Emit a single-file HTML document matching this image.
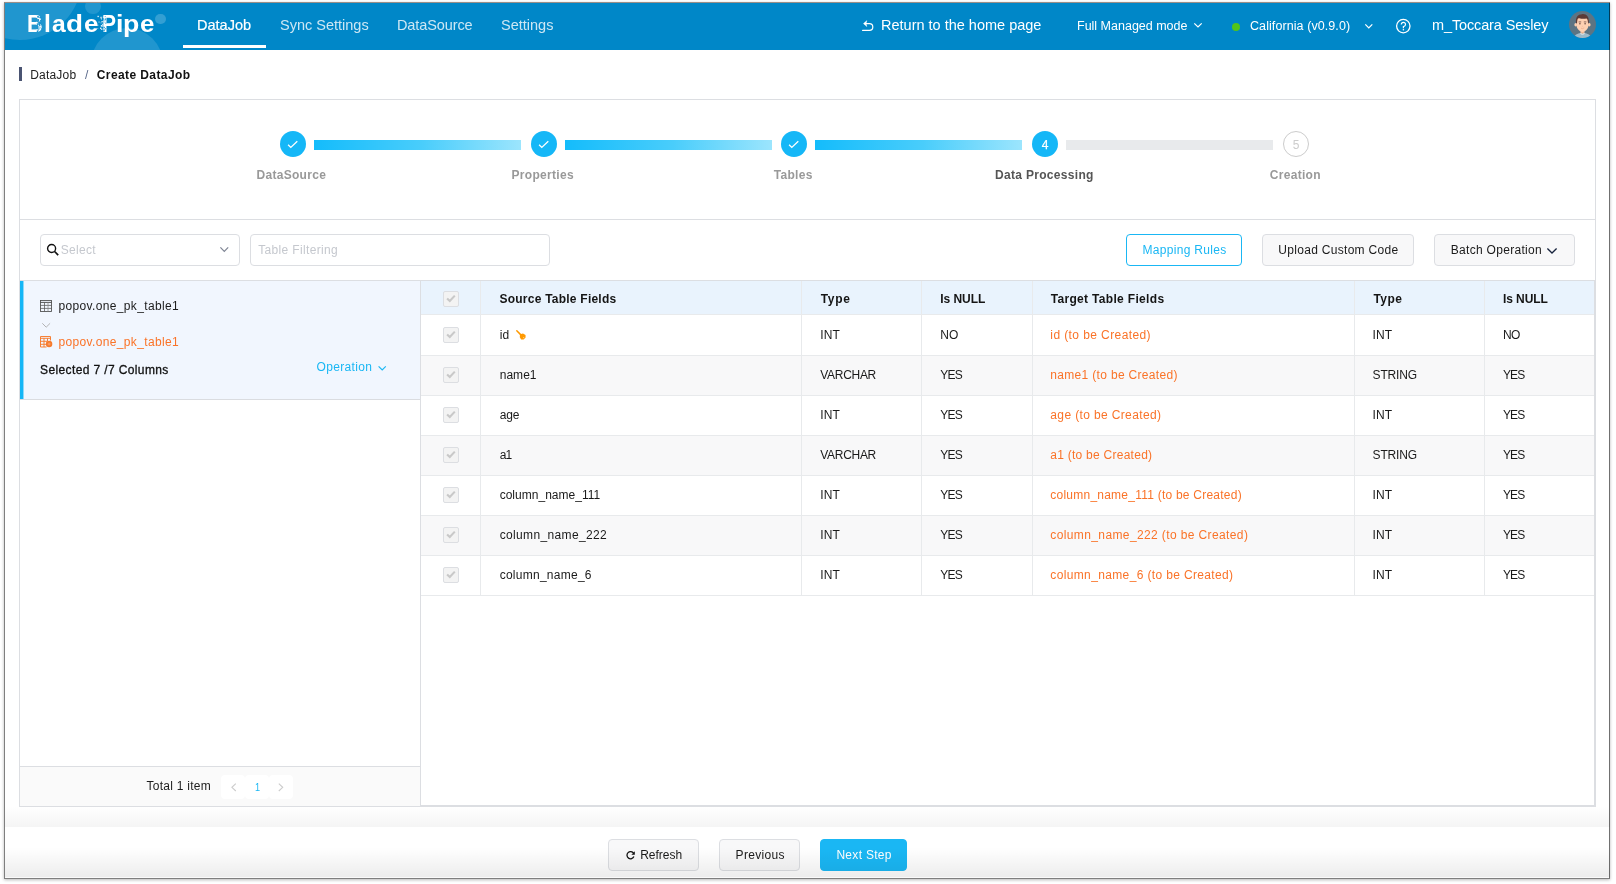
<!DOCTYPE html>
<html>
<head>
<meta charset="utf-8">
<title>BladePipe - Create DataJob</title>
<style>
*{box-sizing:border-box;margin:0;padding:0}
html,body{width:1616px;height:884px;overflow:hidden;background:#fff}
body{font-family:"Liberation Sans",sans-serif;font-size:12px;color:#17233d;position:relative}
.abs{position:absolute}
svg{position:absolute;overflow:visible}
#frame{position:absolute;left:5px;top:3px;width:1605px;height:875px;background:#fff;overflow:hidden;will-change:transform}
#frameborder{position:absolute;left:4px;top:2px;width:1606px;height:877px;border:1px solid rgba(0,0,0,.5);border-right-color:rgba(0,0,0,.56);border-top-color:rgba(70,50,40,.55);box-shadow:0 1px 3px rgba(0,0,0,.28);pointer-events:none}
/* header */
#hdr{position:absolute;left:0;top:0;width:1605px;height:47px;background:#0087c8;overflow:hidden}
#hdr .bub{position:absolute;border-radius:50%;background:rgba(255,255,255,.125)}
.nav{position:absolute;top:0;height:47px;line-height:45px;color:rgba(255,255,255,.8);font-size:14.5px;white-space:nowrap}
.nav.on{color:#fff;-webkit-text-stroke:.2px #fff}
.hr{position:absolute;top:1px;height:47px;line-height:45px;color:#fff;white-space:nowrap}
/* breadcrumb */
.bc{position:absolute;top:64px;height:16px;line-height:16px;font-size:12px;white-space:nowrap;color:#222}
/* card */
#card{position:absolute;left:14px;top:96px;width:1577px;height:708px;border:1px solid #dcdee2;background:#fff}
.stepc{position:absolute;top:128px;width:26px;height:26px;border-radius:50%;background:#15b7f7;color:#fff;text-align:center;line-height:28px;font-size:12px;-webkit-text-stroke:.25px #fff}
.stepl{position:absolute;top:137px;height:10px;background:linear-gradient(90deg,#14bcfb 0%,#49cdfb 52%,#9ce5fd 100%)}
.stept{position:absolute;top:164px;width:200px;text-align:center;font-weight:bold;font-size:12px;color:#999;line-height:16px;letter-spacing:.3px;white-space:nowrap}
.btn{position:absolute;height:32px;line-height:30px;border:1px solid #dcdee2;border-radius:4px;background:#f8f8f9;font-size:12px;color:#1a1a1a;white-space:nowrap}
.btn span{position:absolute;top:0;white-space:nowrap}
.inp{position:absolute;height:32px;border:1px solid #dcdee2;border-radius:4px;background:#fff;font-size:12px;color:#c5c8ce;line-height:30px;white-space:nowrap}
/* table */
.th{position:absolute;top:279.3px;height:34px;line-height:34px;font-weight:bold;font-size:12px;color:#151515;white-space:nowrap;letter-spacing:.18px}
.td{position:absolute;height:40px;line-height:40px;font-size:12px;color:#1a1a1a;white-space:nowrap;letter-spacing:.25px}
.or{color:#fa7328}
.vline{position:absolute;top:278px;width:1px;height:315px;background:#e8eaec}
.hline{position:absolute;left:416px;width:1174px;height:1px;background:#e8eaec}
.cb{position:absolute;left:438px;width:16px;height:16px;border:1px solid #dcdee2;border-radius:2px;background:#f3f3f3}
.cb svg{left:-1px;top:-1px}
.t12{position:absolute;line-height:16px;font-size:12px;white-space:nowrap;letter-spacing:.25px}
</style>
</head>
<body>
<div id="frame">
  <!-- HEADER -->
  <div id="hdr">
    <div class="bub" style="left:-47px;top:-87px;width:124px;height:124px"></div>
    <div class="bub" style="left:80.3px;top:-4.3px;width:15.5px;height:15.5px"></div>
    <div class="bub" style="left:85.5px;top:25.4px;width:72px;height:72px"></div>
    <div class="bub" style="left:150.3px;top:10.6px;width:10.5px;height:10.5px;background:rgba(255,255,255,.2)"></div>
    <div class="abs" id="logo" style="left:0;top:5px;width:170px;height:32px;font-size:24.7px;font-weight:bold;color:#fff;line-height:32px;white-space:nowrap"><span class="abs" style="left:21.7px;top:0;transform-origin:0 0;transform:scaleX(0.88)">B</span><span class="abs" style="left:39.0px;top:0;transform-origin:0 0;transform:scaleX(1)">l</span><span class="abs" style="left:47.1px;top:0;transform-origin:0 0;transform:scaleX(1.0)">a</span><span class="abs" style="left:61.4px;top:0;transform-origin:0 0;transform:scaleX(1.13)">d</span><span class="abs" style="left:79.1px;top:0;transform-origin:0 0;transform:scaleX(1.05)">e</span><span class="abs" style="left:96.8px;top:0;transform-origin:0 0;transform:scaleX(0.85)">P</span><span class="abs" style="left:111.0px;top:0;transform-origin:0 0;transform:scaleX(1.08)">i</span><span class="abs" style="left:118.1px;top:0;transform-origin:0 0;transform:scaleX(1.08)">p</span><span class="abs" style="left:134.8px;top:0;transform-origin:0 0;transform:scaleX(1.05)">e</span></div>
    <svg style="left:0;top:0" width="170" height="47" viewBox="0 0 170 47"><rect x="33.7" y="20.9" width="1.4" height="1.4" fill="#1a93cf"/><rect x="33.7" y="20.1" width="1.2" height="1.2" fill="#1a93cf"/><rect x="32.4" y="20.2" width="1.2" height="1.2" fill="#1a93cf"/><rect x="35.2" y="13.7" width="1.0" height="1.0" fill="#1a93cf"/><rect x="32.0" y="24.8" width="1.3" height="1.3" fill="#1a93cf"/><rect x="31.8" y="27.5" width="1.5" height="1.5" fill="#1a93cf"/><rect x="34.6" y="21.8" width="0.9" height="0.9" fill="#1a93cf"/><rect x="31.7" y="20.4" width="0.8" height="0.8" fill="#1a93cf"/><rect x="32.5" y="16.0" width="0.8" height="0.8" fill="#1a93cf"/><rect x="33.7" y="19.1" width="1.4" height="1.4" fill="#1a93cf"/><rect x="34.0" y="22.2" width="1.1" height="1.1" fill="#1a93cf"/><rect x="34.6" y="19.3" width="1.0" height="1.0" fill="#1a93cf"/><rect x="36.2" y="27.7" width="1.4" height="1.4" fill="#1a93cf"/><rect x="34.9" y="17.1" width="1.0" height="1.0" fill="#1a93cf"/><rect x="32.9" y="13.3" width="1.3" height="1.3" fill="#1a93cf"/><rect x="33.4" y="25.4" width="1.1" height="1.1" fill="#1a93cf"/><rect x="36.0" y="25.4" width="0.8" height="0.8" fill="#1a93cf"/><rect x="32.6" y="26.4" width="1.1" height="1.1" fill="#1a93cf"/><rect x="36.1" y="18.4" width="0.9" height="0.9" fill="#1a93cf"/><rect x="34.5" y="24.3" width="1.0" height="1.0" fill="#1a93cf"/><rect x="32.0" y="17.4" width="1.5" height="1.5" fill="#1a93cf"/><rect x="35.1" y="14.0" width="1.0" height="1.0" fill="#1a93cf"/><rect x="32.1" y="13.1" width="1.4" height="1.4" fill="#1a93cf"/><rect x="32.4" y="20.9" width="1.1" height="1.1" fill="#1a93cf"/><rect x="32.5" y="23.6" width="0.9" height="0.9" fill="#1a93cf"/><rect x="34.6" y="14.0" width="1.1" height="1.1" fill="#1a93cf"/><rect x="32.6" y="16.4" width="1.5" height="1.5" fill="#1a93cf"/><rect x="35.3" y="16.9" width="1.4" height="1.4" fill="#1a93cf"/><rect x="32.6" y="18.4" width="1.4" height="1.4" fill="#1a93cf"/><rect x="34.6" y="13.8" width="1.5" height="1.5" fill="#1a93cf"/><rect x="32.6" y="16.2" width="1.3" height="1.3" fill="#1a93cf"/><rect x="33.1" y="16.8" width="0.9" height="0.9" fill="#1a93cf"/><rect x="32.0" y="21.3" width="1.0" height="1.0" fill="#1a93cf"/><rect x="34.4" y="18.0" width="1.1" height="1.1" fill="#1a93cf"/><rect x="100.3" y="19.7" width="1.0" height="1.0" fill="#1a93cf"/><rect x="100.1" y="14.9" width="0.8" height="0.8" fill="#1a93cf"/><rect x="100.2" y="25.1" width="0.8" height="0.8" fill="#1a93cf"/><rect x="98.6" y="23.8" width="1.2" height="1.2" fill="#1a93cf"/><rect x="98.6" y="27.2" width="1.1" height="1.1" fill="#1a93cf"/><rect x="99.5" y="18.7" width="0.8" height="0.8" fill="#1a93cf"/><rect x="98.3" y="27.4" width="0.8" height="0.8" fill="#1a93cf"/><rect x="99.8" y="16.1" width="1.1" height="1.1" fill="#1a93cf"/><rect x="99.5" y="16.7" width="0.8" height="0.8" fill="#1a93cf"/><rect x="99.8" y="13.1" width="0.8" height="0.8" fill="#1a93cf"/><rect x="99.4" y="25.6" width="1.0" height="1.0" fill="#1a93cf"/><rect x="98.8" y="26.7" width="0.8" height="0.8" fill="#1a93cf"/><rect x="98.2" y="16.3" width="0.9" height="0.9" fill="#1a93cf"/><rect x="98.3" y="14.8" width="0.9" height="0.9" fill="#1a93cf"/><rect x="95.4" y="14.4" width="1.0" height="1.0" fill="#fff" opacity="0.94"/><rect x="92.5" y="12.8" width="1.3" height="1.3" fill="#fff" opacity="0.94"/><rect x="92.4" y="21.7" width="1.0" height="1.0" fill="#fff" opacity="0.71"/><rect x="97.8" y="13.6" width="1.1" height="1.1" fill="#fff" opacity="0.92"/><rect x="96.4" y="22.7" width="1.3" height="1.3" fill="#fff" opacity="0.72"/><rect x="96.1" y="25.6" width="1.3" height="1.3" fill="#fff" opacity="0.88"/><rect x="97.0" y="20.8" width="1.1" height="1.1" fill="#fff" opacity="0.80"/><rect x="95.6" y="13.7" width="1.1" height="1.1" fill="#fff" opacity="0.91"/><rect x="96.3" y="18.1" width="1.2" height="1.2" fill="#fff" opacity="0.75"/><rect x="95.6" y="19.5" width="0.9" height="0.9" fill="#fff" opacity="0.77"/><rect x="97.3" y="22.1" width="1.0" height="1.0" fill="#fff" opacity="0.71"/><rect x="96.0" y="15.4" width="1.0" height="1.0" fill="#fff" opacity="0.92"/><rect x="97.1" y="18.1" width="1.1" height="1.1" fill="#fff" opacity="0.65"/><rect x="95.0" y="24.6" width="1.3" height="1.3" fill="#fff" opacity="0.93"/><rect x="93.5" y="18.5" width="1.1" height="1.1" fill="#fff" opacity="0.71"/><rect x="92.5" y="25.2" width="0.7" height="0.7" fill="#fff" opacity="0.80"/><rect x="95.8" y="22.0" width="1.3" height="1.3" fill="#fff" opacity="0.84"/></svg>
    <div class="nav on" id="n1" style="left:192px">DataJob</div>
    <div class="abs" style="left:178px;top:42px;width:83px;height:3px;background:#fff"></div>
    <div class="nav" id="n2" style="left:275px">Sync Settings</div>
    <div class="nav" id="n3" style="left:392px;letter-spacing:-.1px">DataSource</div>
    <div class="nav" id="n4" style="left:496px">Settings</div>
    <!-- return icon -->
    <svg style="left:855px;top:15px" width="16" height="16" viewBox="0 0 16 16"><path d="M4.5 5.6H9.4A3.4 3.4 0 0 1 9.4 12.4H2.6" fill="none" stroke="#fff" stroke-width="1.2" stroke-linecap="round"/><path d="M6.8 2.7L3.5 5.6L6.8 8.5L6 5.6Z" fill="#fff" stroke="#fff" stroke-width=".5" stroke-linejoin="round"/></svg>
    <div class="hr" id="h1" style="left:876px;top:0;font-size:14.5px">Return to the home page</div>
    <div class="hr" id="h2" style="left:1072px;font-size:12.5px">Full Managed mode</div>
    <svg style="left:1189px;top:20px" width="8" height="5" viewBox="0 0 8 5"><path d="M.3 .4L4 4L7.7 .4" fill="none" stroke="#fff" stroke-width="1.25"/></svg>
    <div class="abs" style="left:1227px;top:19.8px;width:8.2px;height:8.2px;border-radius:50%;background:#52c41a"></div>
    <div class="hr" id="h3" style="left:1245px;font-size:12.5px;letter-spacing:.08px">California (v0.9.0)</div>
    <svg style="left:1359.6px;top:21px" width="8" height="5" viewBox="0 0 8 5"><path d="M.3 .4L3.8 3.9L7.3 .4" fill="none" stroke="#fff" stroke-width="1.25"/></svg>
    <!-- help icon -->
    <svg style="left:1390px;top:15.2px" width="17" height="17" viewBox="0 0 17 17"><circle cx="8.3" cy="8.1" r="6.7" fill="none" stroke="#fff" stroke-width="1.3"/><path d="M6.3 6.5A2.1 2.1 0 1 1 8.4 8.5V10.2" fill="none" stroke="#fff" stroke-width="1.2"/><circle cx="8.4" cy="11.8" r=".8" fill="#fff"/></svg>
    <div class="hr" id="h4" style="left:1427px;top:0;font-size:14.5px;letter-spacing:-.13px">m_Toccara Sesley</div>
    <!-- avatar -->
    <div class="abs" style="left:1564.1px;top:8.1px;width:26.8px;height:26.8px;border-radius:50%;overflow:hidden;background:#5c7483">
    <svg style="left:-.1px;top:-.1px" width="27" height="27" viewBox="0 0 27 27">
      <g>
        <ellipse cx="13.5" cy="28" rx="9" ry="6.2" fill="#9dbaca"/>
        <rect x="11.6" y="18" width="3.8" height="4.6" fill="#f3b994"/>
        <path d="M11.4 21.6L13.5 23.4L15.6 21.6L15.4 22.9L13.5 24L11.6 22.9Z" fill="#e8eef2"/>
        <ellipse cx="6.7" cy="13.8" rx="1.3" ry="1.7" fill="#fdcfae"/>
        <ellipse cx="20.3" cy="13.8" rx="1.3" ry="1.7" fill="#fdcfae"/>
        <path d="M7.6 8.5C7.6 5 19.4 5 19.4 8.5V14.5C19.4 18 16 21 13.5 21C11 21 7.6 18 7.6 14.5Z" fill="#fed1b2"/>
        <path d="M7.1 12.4C6.2 6 9 3.4 13 3.2C17 2.6 20.6 5.5 19.9 12.4L18.9 11.6C18.8 9.5 18.6 8.2 17.6 7.4C14.5 8 10.5 7.6 9.2 7.2C8.3 8.2 8.2 9.8 8.1 11.8Z" fill="#5b3a36"/>
        <rect x="9.6" y="10.6" width="2.6" height=".7" fill="#5b3a36"/><rect x="14.8" y="10.6" width="2.6" height=".7" fill="#5b3a36"/>
        <ellipse cx="10.9" cy="12.7" rx=".8" ry=".7" fill="#6b4a40"/><ellipse cx="16.1" cy="12.7" rx=".8" ry=".7" fill="#6b4a40"/>
        <path d="M12 17.2Q13.6 18.3 15.2 16.8" fill="none" stroke="#e5a383" stroke-width=".6"/>
        <path d="M12.9 15.3H14.1" stroke="#eeb697" stroke-width=".6"/>
      </g>
    </svg>
    </div>
  </div>

  <!-- BREADCRUMB -->
  <div class="abs" style="left:14px;top:64px;width:3px;height:14px;background:#4a5472"></div>
  <div class="bc" id="b1" style="left:25.2px;letter-spacing:.2px">DataJob</div>
  <div class="bc" style="left:80px;color:#5b6b8c">/</div>
  <div class="bc" id="b2" style="left:91.8px;font-weight:bold;color:#111;letter-spacing:.4px">Create DataJob</div>

  <!-- CARD -->
  <div id="card"></div>

  <!-- STEPS -->
  <div class="stepl" style="left:309px;width:207px"></div>
  <div class="stepl" style="left:560px;width:207px"></div>
  <div class="stepl" style="left:810px;width:207px"></div>
  <div class="stepl" style="left:1061px;width:207px;background:#e8eaec"></div>
  <div class="stepc" style="left:275px"></div>
  <div class="stepc" style="left:526px"></div>
  <div class="stepc" style="left:776px"></div>
  <div class="stepc" style="left:1027px">4</div>
  <div class="stepc" style="left:1278px;background:#fff;border:1px solid #ccc;color:#ccc;line-height:26px;-webkit-text-stroke:0">5</div>
  <svg style="left:282px;top:137px" width="12" height="9" viewBox="0 0 12 9"><path d="M1.1 4.7L3.8 7.4L10.3 1.2" fill="none" stroke="#fff" stroke-width="1.3"/></svg>
  <svg style="left:533px;top:137px" width="12" height="9" viewBox="0 0 12 9"><path d="M1.1 4.7L3.8 7.4L10.3 1.2" fill="none" stroke="#fff" stroke-width="1.3"/></svg>
  <svg style="left:783px;top:137px" width="12" height="9" viewBox="0 0 12 9"><path d="M1.1 4.7L3.8 7.4L10.3 1.2" fill="none" stroke="#fff" stroke-width="1.3"/></svg>
  <div class="stept" id="s1" style="left:186.3px">DataSource</div>
  <div class="stept" id="s2" style="left:437.7px">Properties</div>
  <div class="stept" id="s3" style="left:688.2px">Tables</div>
  <div class="stept" id="s4" style="left:939.4px;color:#555">Data Processing</div>
  <div class="stept" id="s5" style="left:1190.3px">Creation</div>
  <div class="abs" style="left:15px;top:216px;width:1575px;height:1px;background:#dcdee2"></div>

  <!-- TOOLBAR -->
  <div class="inp" style="left:35px;top:231px;width:200px"><span class="abs" id="t1" style="left:19.7px;top:0;letter-spacing:.3px">Select</span></div>
  <svg style="left:41px;top:240px" width="14" height="14" viewBox="0 0 14 14"><circle cx="5.6" cy="5.5" r="4" fill="none" stroke="#111" stroke-width="1.4"/><path d="M8.6 8.5L12.2 12.1" stroke="#111" stroke-width="1.7"/></svg>
  <svg style="left:214.5px;top:244px" width="9" height="6" viewBox="0 0 9 6"><path d="M.4 .4L4.3 4.4L8.2 .4" fill="none" stroke="#808695" stroke-width="1.25"/></svg>
  <div class="inp" style="left:245px;top:231px;width:300px"><span class="abs" id="t2" style="left:7.2px;top:0;letter-spacing:.35px">Table Filtering</span></div>
  <div class="btn" style="left:1121px;top:231px;width:116px;background:#fff;border-color:#1ab7f4;color:#1ab7f4"><span id="t3" style="left:15.5px;letter-spacing:.3px">Mapping Rules</span></div>
  <div class="btn" style="left:1257px;top:231px;width:152px"><span id="t4" style="left:15.3px;letter-spacing:.3px">Upload Custom Code</span></div>
  <div class="btn" style="left:1429px;top:231px;width:141px"><span id="t5" style="left:15.8px;letter-spacing:.3px">Batch Operation</span></div>
  <svg style="left:1542.3px;top:245px" width="10" height="6" viewBox="0 0 10 6"><path d="M.4 .5L5 5L9.6 .5" fill="none" stroke="#17233d" stroke-width="1.3"/></svg>

  <div class="abs" style="left:15px;top:277px;width:1575px;height:1px;background:#dcdee2"></div>

  <!-- LEFT PANEL -->
  <div class="abs" style="left:15px;top:278px;width:400px;height:119px;background:#f1f6fe;border-bottom:1px solid #dadce0"></div>
  <div class="abs" style="left:15px;top:278px;width:3px;height:118px;background:#15b6f6"></div><div class="abs" style="left:18px;top:278px;width:1px;height:118px;background:#15b6f6;opacity:.45"></div>
  <div class="abs" style="left:415px;top:278px;width:1px;height:525px;background:#dcdee2"></div>
  <!-- table icon (dark) -->
  <svg style="left:35px;top:297px" width="12" height="12" viewBox="0 0 12 12"><rect x=".5" y=".5" width="11" height="11" fill="none" stroke="#4a4a4a" stroke-width=".85"/><path d="M.5 2.4H11.5" stroke="#444" stroke-width=".9" fill="none"/><path d="M.5 5.4H11.5M.5 8.4H11.5M4.5 2.4V11.5" stroke="#555" stroke-width=".75" fill="none"/><path d="M8 2.4V11.5" stroke="#888" stroke-width=".75" fill="none"/></svg>
  <div class="t12" id="l1" style="left:53.4px;top:295px;color:#1c1c1c;letter-spacing:.36px">popov.one_pk_table1</div>
  <svg style="left:37px;top:320px" width="9" height="5" viewBox="0 0 9 5"><path d="M.3 .3L4.2 4.2L8.1 .3" fill="none" stroke="#aaa" stroke-width=".9"/></svg>
  <!-- table icon (orange, with plus) -->
  <svg style="left:35px;top:333px" width="13" height="12" viewBox="0 0 13 12"><path d="M.5 11V.5H10.5V4.5M.5 2.3H10.5M.5 5.3H7M.5 8.3H6M.5 11H6.5M4 2.3V11M7.5 2.3V5" stroke="#f67a2c" stroke-width=".95" fill="none"/><circle cx="9.1" cy="8" r="3.2" fill="#f67a2c"/><path d="M7.6 8H10.6M9.1 6.5V9.5" stroke="#fbb28a" stroke-width=".7"/></svg>
  <div class="t12 or" id="l2" style="left:53.4px;top:331px;letter-spacing:.36px">popov.one_pk_table1</div>
  <div class="t12" id="l3" style="left:35px;top:359px;color:#111;-webkit-text-stroke:.3px #111;letter-spacing:.38px">Selected 7 /7 Columns</div>
  <div class="t12" id="l4" style="left:311.5px;top:356px;color:#1ab7f4;letter-spacing:.34px">Operation</div>
  <svg style="left:372.5px;top:362.7px" width="9" height="5" viewBox="0 0 9 5"><path d="M.6 .4L4.2 3.9L7.8 .4" fill="none" stroke="#1ab7f4" stroke-width="1.2"/></svg>
  <div class="abs" style="left:15px;top:763px;width:400px;height:40px;background:#fafafa;border-top:1px solid #dcdee2"></div>
  <div class="t12" id="l5" style="left:141.6px;top:775px;color:#1c1c1c">Total 1 item</div>
  <div class="abs" style="left:216px;top:772px;width:24px;height:24px;border-radius:4px;background:#fff"></div>
  <div class="abs" style="left:240px;top:772px;width:24px;height:24px;border-radius:4px;background:#fff"></div>
  <div class="abs" style="left:264px;top:772px;width:24px;height:24px;border-radius:4px;background:#fff"></div>
  <svg style="left:225.5px;top:780px" width="6" height="9" viewBox="0 0 6 9"><path d="M4.8 .6L.9 4.3L4.8 8" fill="none" stroke="#ccc" stroke-width="1.1"/></svg>
  <svg style="left:273.2px;top:780px" width="6" height="9" viewBox="0 0 6 9"><path d="M.8 .6L4.7 4.3L.8 8" fill="none" stroke="#ccc" stroke-width="1.1"/></svg>
  <div class="t12" style="left:249.6px;top:776.4px;color:#1ab7f4;letter-spacing:0;font-size:11.5px;transform:scaleX(.8);transform-origin:0 0">1</div>

  <!-- TABLE -->
  <div class="abs" style="left:416px;top:278px;width:1174px;height:34px;background:#e9f3fd"></div>
  <div class="abs" style="left:416px;top:353px;width:1174px;height:39px;background:#f8f8f9"></div>
  <div class="abs" style="left:416px;top:433px;width:1174px;height:39px;background:#f8f8f9"></div>
  <div class="abs" style="left:416px;top:513px;width:1174px;height:39px;background:#f8f8f9"></div>
  <div class="th" id="th0" style="left:494.50px;letter-spacing:0.233px">Source Table Fields</div>
  <div class="th" id="th1" style="left:815.64px;letter-spacing:0.713px">Type</div>
  <div class="th" id="th2" style="left:935.32px;letter-spacing:-0.052px">Is NULL</div>
  <div class="th" id="th3" style="left:1045.64px;letter-spacing:0.326px">Target Table Fields</div>
  <div class="th" id="th4" style="left:1368.38px;letter-spacing:0.448px">Type</div>
  <div class="th" id="th5" style="left:1497.90px;letter-spacing:-0.053px">Is NULL</div>
  <div class="cb" style="top:288px"><svg width="16" height="16" viewBox="0 0 16 16"><path d="M4.1 7.4L6.8 10L11.8 4.6" fill="none" stroke="#c9c9c9" stroke-width="2.1"/></svg></div>
  <div class="cb" style="top:324px"><svg width="16" height="16" viewBox="0 0 16 16"><path d="M4.1 7.4L6.8 10L11.8 4.6" fill="none" stroke="#c9c9c9" stroke-width="2.1"/></svg></div>
  <div class="td" id="r0c0" style="left:494.66px;letter-spacing:0.300px;top:312.4px">id</div>
  <div class="td" id="r0c1" style="left:815.32px;letter-spacing:0.040px;top:312.4px">INT</div>
  <div class="td" id="r0c2" style="left:935.32px;letter-spacing:-0.080px;top:312.4px">NO</div>
  <div class="td or" id="r0c3" style="left:1045.32px;letter-spacing:0.407px;top:312.4px">id (to be Created)</div>
  <div class="td" id="r0c4" style="left:1367.58px;letter-spacing:0.120px;top:312.4px">INT</div>
  <div class="td" id="r0c5" style="left:1497.90px;letter-spacing:-0.560px;top:312.4px">NO</div>
  <div class="hline" style="top:352px"></div>
  <div class="cb" style="top:364px"><svg width="16" height="16" viewBox="0 0 16 16"><path d="M4.1 7.4L6.8 10L11.8 4.6" fill="none" stroke="#c9c9c9" stroke-width="2.1"/></svg></div>
  <div class="td" id="r1c0" style="left:494.66px;letter-spacing:0.050px;top:352.4px">name1</div>
  <div class="td" id="r1c1" style="left:815.32px;letter-spacing:-0.307px;top:352.4px">VARCHAR</div>
  <div class="td" id="r1c2" style="left:935.32px;letter-spacing:-0.800px;top:352.4px">YES</div>
  <div class="td or" id="r1c3" style="left:1045.32px;letter-spacing:0.322px;top:352.4px">name1 (to be Created)</div>
  <div class="td" id="r1c4" style="left:1367.58px;letter-spacing:-0.168px;top:352.4px">STRING</div>
  <div class="td" id="r1c5" style="left:1497.90px;letter-spacing:-0.800px;top:352.4px">YES</div>
  <div class="hline" style="top:392px"></div>
  <div class="cb" style="top:404px"><svg width="16" height="16" viewBox="0 0 16 16"><path d="M4.1 7.4L6.8 10L11.8 4.6" fill="none" stroke="#c9c9c9" stroke-width="2.1"/></svg></div>
  <div class="td" id="r2c0" style="left:494.66px;letter-spacing:-0.070px;top:392.4px">age</div>
  <div class="td" id="r2c1" style="left:815.32px;letter-spacing:0.040px;top:392.4px">INT</div>
  <div class="td" id="r2c2" style="left:935.32px;letter-spacing:-0.800px;top:392.4px">YES</div>
  <div class="td or" id="r2c3" style="left:1045.32px;letter-spacing:0.366px;top:392.4px">age (to be Created)</div>
  <div class="td" id="r2c4" style="left:1367.58px;letter-spacing:0.120px;top:392.4px">INT</div>
  <div class="td" id="r2c5" style="left:1497.90px;letter-spacing:-0.800px;top:392.4px">YES</div>
  <div class="hline" style="top:432px"></div>
  <div class="cb" style="top:444px"><svg width="16" height="16" viewBox="0 0 16 16"><path d="M4.1 7.4L6.8 10L11.8 4.6" fill="none" stroke="#c9c9c9" stroke-width="2.1"/></svg></div>
  <div class="td" id="r3c0" style="left:494.66px;letter-spacing:-0.900px;top:432.4px">a1</div>
  <div class="td" id="r3c1" style="left:815.32px;letter-spacing:-0.307px;top:432.4px">VARCHAR</div>
  <div class="td" id="r3c2" style="left:935.32px;letter-spacing:-0.800px;top:432.4px">YES</div>
  <div class="td or" id="r3c3" style="left:1045.32px;letter-spacing:0.256px;top:432.4px">a1 (to be Created)</div>
  <div class="td" id="r3c4" style="left:1367.58px;letter-spacing:-0.168px;top:432.4px">STRING</div>
  <div class="td" id="r3c5" style="left:1497.90px;letter-spacing:-0.800px;top:432.4px">YES</div>
  <div class="hline" style="top:472px"></div>
  <div class="cb" style="top:484px"><svg width="16" height="16" viewBox="0 0 16 16"><path d="M4.1 7.4L6.8 10L11.8 4.6" fill="none" stroke="#c9c9c9" stroke-width="2.1"/></svg></div>
  <div class="td" id="r4c0" style="left:494.66px;letter-spacing:0.021px;top:472.4px">column_name_111</div>
  <div class="td" id="r4c1" style="left:815.32px;letter-spacing:0.040px;top:472.4px">INT</div>
  <div class="td" id="r4c2" style="left:935.32px;letter-spacing:-0.800px;top:472.4px">YES</div>
  <div class="td or" id="r4c3" style="left:1045.32px;letter-spacing:0.233px;top:472.4px">column_name_111 (to be Created)</div>
  <div class="td" id="r4c4" style="left:1367.58px;letter-spacing:0.120px;top:472.4px">INT</div>
  <div class="td" id="r4c5" style="left:1497.90px;letter-spacing:-0.800px;top:472.4px">YES</div>
  <div class="hline" style="top:512px"></div>
  <div class="cb" style="top:524px"><svg width="16" height="16" viewBox="0 0 16 16"><path d="M4.1 7.4L6.8 10L11.8 4.6" fill="none" stroke="#c9c9c9" stroke-width="2.1"/></svg></div>
  <div class="td" id="r5c0" style="left:494.66px;letter-spacing:0.354px;top:512.4px">column_name_222</div>
  <div class="td" id="r5c1" style="left:815.32px;letter-spacing:0.040px;top:512.4px">INT</div>
  <div class="td" id="r5c2" style="left:935.32px;letter-spacing:-0.800px;top:512.4px">YES</div>
  <div class="td or" id="r5c3" style="left:1045.32px;letter-spacing:0.383px;top:512.4px">column_name_222 (to be Created)</div>
  <div class="td" id="r5c4" style="left:1367.58px;letter-spacing:0.120px;top:512.4px">INT</div>
  <div class="td" id="r5c5" style="left:1497.90px;letter-spacing:-0.800px;top:512.4px">YES</div>
  <div class="hline" style="top:552px"></div>
  <div class="cb" style="top:564px"><svg width="16" height="16" viewBox="0 0 16 16"><path d="M4.1 7.4L6.8 10L11.8 4.6" fill="none" stroke="#c9c9c9" stroke-width="2.1"/></svg></div>
  <div class="td" id="r6c0" style="left:494.66px;letter-spacing:0.264px;top:552.4px">column_name_6</div>
  <div class="td" id="r6c1" style="left:815.32px;letter-spacing:0.040px;top:552.4px">INT</div>
  <div class="td" id="r6c2" style="left:935.32px;letter-spacing:-0.800px;top:552.4px">YES</div>
  <div class="td or" id="r6c3" style="left:1045.32px;letter-spacing:0.358px;top:552.4px">column_name_6 (to be Created)</div>
  <div class="td" id="r6c4" style="left:1367.58px;letter-spacing:0.120px;top:552.4px">INT</div>
  <div class="td" id="r6c5" style="left:1497.90px;letter-spacing:-0.800px;top:552.4px">YES</div>
  <div class="hline" style="top:592px"></div>
  <div class="hline" style="top:311px"></div>
  <div class="vline" style="left:475px"></div>
  <div class="vline" style="left:796px"></div>
  <div class="vline" style="left:916px"></div>
  <div class="vline" style="left:1027px"></div>
  <div class="vline" style="left:1349px"></div>
  <div class="vline" style="left:1479px"></div>
  <div class="abs" style="left:416px;top:802px;width:1175px;height:1px;background:#dcdee2"></div>
  <div class="abs" style="left:1589px;top:278px;width:1px;height:525px;background:#dcdee2"></div>
  <!-- key icon -->
  <svg style="left:510px;top:326px" width="12" height="12" viewBox="0 0 12 12"><path d="M1.8 1.8L6.6 6.6" stroke="#ff9900" stroke-width="1.5" stroke-linecap="round"/><path d="M5 5.2L8 4.6L10.5 6.1L10.6 8.6L8.6 10.6L6.1 10.4L4.8 8.3Z" fill="#ff9900"/><circle cx="8.7" cy="8.6" r=".6" fill="#ffd699"/></svg>

  <!-- BOTTOM BAR -->
  <div class="abs" style="left:0;top:804px;width:1605px;height:20px;background:linear-gradient(180deg,#fff 0%,#f5f5f5 100%)"></div>
  <div class="abs" style="left:0;top:824px;width:1605px;height:51px;background:#fff"></div>
  <div class="btn" style="left:603px;top:836px;width:91px"><span id="f1" style="left:31.2px">Refresh</span></div>
  <svg style="left:620px;top:847px" width="11" height="11" viewBox="0 0 11 11"><path d="M8.6 3.2A3.6 3.6 0 1 0 8.9 6.6" fill="none" stroke="#111" stroke-width="1.3"/><path d="M9.8 1.3V4.7H6.4Z" fill="#111"/></svg>
  <div class="btn" style="left:714px;top:836px;width:81px"><span id="f2" style="left:15.6px;letter-spacing:.3px">Previous</span></div>
  <div class="btn" style="left:815px;top:836px;width:87px;background:#1ab7f4;border-color:#1ab7f4;color:#fff"><span id="f3" style="left:15.4px;letter-spacing:.3px">Next Step</span></div>
  <div class="abs" style="left:0;top:824px;width:1605px;height:51px;background:linear-gradient(180deg,rgba(0,0,0,0) 0%,rgba(0,0,0,0) 40%,rgba(0,0,0,.075) 100%);pointer-events:none"></div>
  <div class="abs" style="left:0;top:874px;width:1605px;height:1px;background:rgba(255,255,255,.75)"></div>
</div>
<div id="frameborder"></div>
</body>
</html>
